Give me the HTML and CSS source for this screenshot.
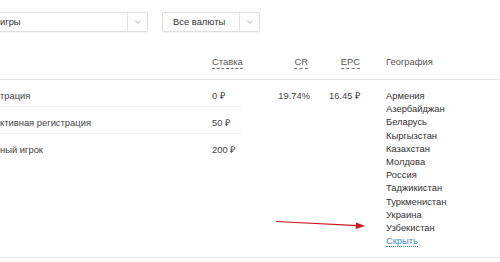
FILE: index.html
```html
<!DOCTYPE html>
<html lang="ru">
<head>
    <meta charset="UTF-8">
    <meta name="viewport" content="width=device-width, initial-scale=1.0">
    <title>Офферы</title>
    <link rel="stylesheet" href="styles.css">
</head>
<body>
    <div class="page">
        <div class="filters">
            <div class="select select-wide">
                <span class="select-text">игры</span>
                <span class="select-btn"><span class="chevron"></span></span>
            </div>
            <div class="select select-small">
                <span class="select-text">Все валюты</span>
                <span class="select-btn"><span class="chevron"></span></span>
            </div>
        </div>

        <div class="table-head">
            <div class="col-name"></div>
            <div class="col-stake"><span class="hint">Ставка</span></div>
            <div class="col-cr"><span class="hint">CR</span></div>
            <div class="col-epc"><span class="hint">EPC</span></div>
            <div class="col-geo">География</div>
        </div>

        <div class="table-body">
            <div class="rows">
                <div class="row">
                    <div class="col-name">трация</div>
                    <div class="col-stake">0 ₽</div>
                    <div class="col-cr">19.74%</div>
                    <div class="col-epc">16.45 ₽</div>
                </div>
                <div class="row">
                    <div class="col-name">ктивная регистрация</div>
                    <div class="col-stake">50 ₽</div>
                    <div class="col-cr"></div>
                    <div class="col-epc"></div>
                </div>
                <div class="row">
                    <div class="col-name">ный игрок</div>
                    <div class="col-stake">200 ₽</div>
                    <div class="col-cr"></div>
                    <div class="col-epc"></div>
                </div>
            </div>
            <ul class="geo-list">
                <li>Армения</li>
                <li>Азербайджан</li>
                <li>Беларусь</li>
                <li>Кыргызстан</li>
                <li>Казахстан</li>
                <li>Молдова</li>
                <li>Россия</li>
                <li>Таджикистан</li>
                <li>Туркменистан</li>
                <li>Украина</li>
                <li>Узбекистан</li>
                <li><a class="toggle" href="#">Скрыть</a></li>
            </ul>
        </div>
    </div>

    <!-- стрелка-пометка поверх скриншота -->
    <svg class="arrow" width="500" height="262" viewBox="0 0 500 262">
        <line x1="276" y1="221.5" x2="358" y2="225.6" stroke="#c8161d" stroke-width="1.2"/>
        <polygon points="365,226 356,222.6 355.6,229" fill="#d4141c"/>
    </svg>
</body>
</html>
```

FILE: styles.css
```css
html, body {
    margin: 0;
    padding: 0;
    background-color: #fff;
    overflow: hidden;
}
body {
    width: 500px;
    height: 262px;
    position: relative;
    font-family: "Liberation Sans", Arial, sans-serif;
    font-size: 9.4px;
    color: #444;
}
.page {
    width: 500px;
}
.filters {
    display: flex;
    gap: 14px;
    padding-top: 12px;
    height: 20px;
}
.select {
    display: flex;
    box-sizing: border-box;
    height: 20px;
    border: 1px solid #dedede;
    border-radius: 2px;
    box-shadow: 0 1px 1px rgba(0,0,0,0.04);
    background-color: #fff;
}
.select-wide {
    width: 148px;
    border-left: none;
    border-radius: 0 2px 2px 0;
}
.select-small {
    width: 98px;
}
.select-text {
    flex: 1;
    padding-left: 10px;
    line-height: 18px;
    color: #333;
}
.select-wide .select-text {
    padding-left: 0;
}
.select-btn {
    width: 19px;
    border-left: 1px solid #e4e4e4;
    display: flex;
    align-items: center;
    justify-content: center;
}
.chevron {
    width: 3px;
    height: 3px;
    border-right: 1px solid #c4c4c4;
    border-bottom: 1px solid #c4c4c4;
    transform: rotate(45deg);
    margin-top: -2px;
}
.table-head, .row {
    display: grid;
    grid-template-columns: 212px 30px 68px 50px;
}
.table-head {
    grid-template-columns: 212px 30px 68px 50px 1fr;
    margin-top: 12px;
    height: 35px;
    align-items: center;
    border-bottom: 1px solid #e6e6e6;
    color: #555;
}
.col-name {
    white-space: nowrap;
}
.col-cr, .col-epc {
    text-align: right;
}
.table-head .col-geo {
    padding-left: 26px;
}
.hint {
    display: inline-block;
    line-height: 13px;
    border-bottom: 1px dashed #777;
}
.table-head .col-stake {
    white-space: nowrap;
}
.table-head .col-cr {
    padding-right: 2px;
}
.table-body {
    display: flex;
    border-bottom: 1px solid #e8e8e8;
}
.rows {
    width: 360px;
}
.row {
    height: 27px;
    line-height: 13px;
    padding-top: 9px;
    box-sizing: border-box;
}
.row .col-name, .row .col-stake {
    border-bottom: 1px solid #f1f1f1;
}
.row:last-child .col-name, .row:last-child .col-stake {
    border-bottom: none;
}
.geo-list {
    list-style: none;
    margin: 0;
    padding: 9px 0 9.6px 26px;
    line-height: 13.2px;
    color: #333;
}
.toggle {
    color: #3d8fd1;
    text-decoration: none;
    border-bottom: 1px dotted #3d8fd1;
}
.arrow {
    position: absolute;
    left: 0;
    top: 0;
    pointer-events: none;
}
```
